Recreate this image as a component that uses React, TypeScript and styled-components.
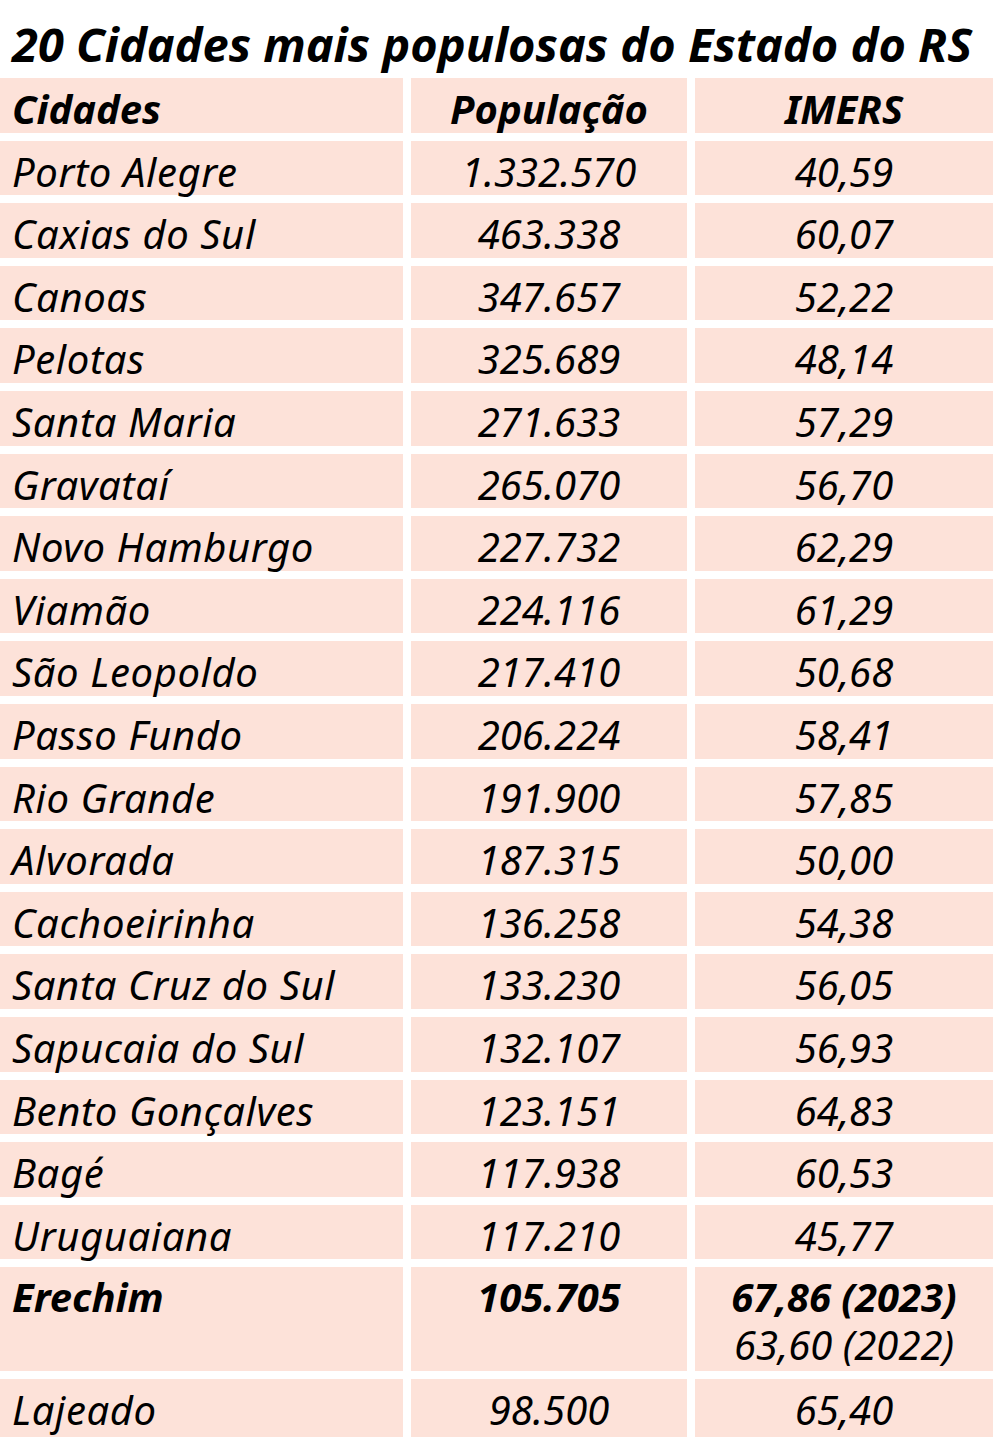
import React from 'react';
import styled, { createGlobalStyle } from 'styled-components';

const GlobalStyle = createGlobalStyle`
  html, body {
    margin: 0;
    padding: 0;
    background: #ffffff;
  }
  body {
    font-family: 'Noto Sans', 'Open Sans', sans-serif;
    color: #000000;
  }
`;

type RowSize = 'normal' | 'tall' | 'last';

interface ICityRow {
  city: string;
  population: string;
  imers: string[];
  highlight?: boolean;
}

const rows: ICityRow[] = [
  { city: 'Porto Alegre', population: '1.332.570', imers: ['40,59'] },
  { city: 'Caxias do Sul', population: '463.338', imers: ['60,07'] },
  { city: 'Canoas', population: '347.657', imers: ['52,22'] },
  { city: 'Pelotas', population: '325.689', imers: ['48,14'] },
  { city: 'Santa Maria', population: '271.633', imers: ['57,29'] },
  { city: 'Gravataí', population: '265.070', imers: ['56,70'] },
  { city: 'Novo Hamburgo', population: '227.732', imers: ['62,29'] },
  { city: 'Viamão', population: '224.116', imers: ['61,29'] },
  { city: 'São Leopoldo', population: '217.410', imers: ['50,68'] },
  { city: 'Passo Fundo', population: '206.224', imers: ['58,41'] },
  { city: 'Rio Grande', population: '191.900', imers: ['57,85'] },
  { city: 'Alvorada', population: '187.315', imers: ['50,00'] },
  { city: 'Cachoeirinha', population: '136.258', imers: ['54,38'] },
  { city: 'Santa Cruz do Sul', population: '133.230', imers: ['56,05'] },
  { city: 'Sapucaia do Sul', population: '132.107', imers: ['56,93'] },
  { city: 'Bento Gonçalves', population: '123.151', imers: ['64,83'] },
  { city: 'Bagé', population: '117.938', imers: ['60,53'] },
  { city: 'Uruguaiana', population: '117.210', imers: ['45,77'] },
  { city: 'Erechim', population: '105.705', imers: ['67,86 (2023)', '63,60 (2022)'], highlight: true },
  { city: 'Lajeado', population: '98.500', imers: ['65,40'] },
];

const heights: Record<RowSize, string> = {
  normal: '54.6px',
  tall: '104px',
  last: '58px',
};

const App = () => {
  return (
    <>
      <GlobalStyle />
      <Page>
        <Title>20 Cidades mais populosas do Estado do RS</Title>
        <Table>
          <NameCell $bold>Cidades</NameCell>
          <Cell $bold>População</Cell>
          <Cell $bold>IMERS</Cell>
          {rows.map((row, index) => {
            const size: RowSize = row.highlight ? 'tall' : index === rows.length - 1 ? 'last' : 'normal';
            return (
              <React.Fragment key={row.city}>
                <NameCell $bold={row.highlight} $size={size}>{row.city}</NameCell>
                <Cell $bold={row.highlight} $size={size}>{row.population}</Cell>
                <Cell $size={size}>
                  {row.imers.map((value, i) => (
                    <Line key={value} $bold={row.highlight && i === 0}>{value}</Line>
                  ))}
                </Cell>
              </React.Fragment>
            );
          })}
        </Table>
      </Page>
    </>
  );
};

const Page = styled.div`
  width: 998px;
  display: flex;
  flex-direction: column;
`;

const Title = styled.h1`
  margin: 0 0 10px;
  padding: 20px 0 0 12px;
  font-size: 47px;
  line-height: 48px;
  font-weight: 700;
  font-style: italic;
  white-space: nowrap;
`;

const Table = styled.div`
  display: grid;
  grid-template-columns: 403px 276px 298px;
  column-gap: 8px;
  row-gap: 8px;
`;

const Cell = styled.div<{ $bold?: boolean; $size?: RowSize }>`
  box-sizing: border-box;
  height: ${(props) => heights[props.$size || 'normal']};
  padding-top: ${(props) => (props.$size === 'tall' ? '6px' : '11px')};
  background: #fde2d9;
  font-size: 40px;
  line-height: ${(props) => (props.$size === 'tall' ? '48px' : '40px')};
  font-style: italic;
  font-weight: ${(props) => (props.$bold ? 700 : 400)};
  text-align: center;
  white-space: nowrap;
`;

const NameCell = styled(Cell)`
  padding-left: 12px;
  text-align: left;
  letter-spacing: ${(props) => (props.$bold ? '0' : '0.6px')};
`;

const Line = styled.div<{ $bold?: boolean }>`
  font-weight: ${(props) => (props.$bold ? 700 : 400)};
`;

export default App;
